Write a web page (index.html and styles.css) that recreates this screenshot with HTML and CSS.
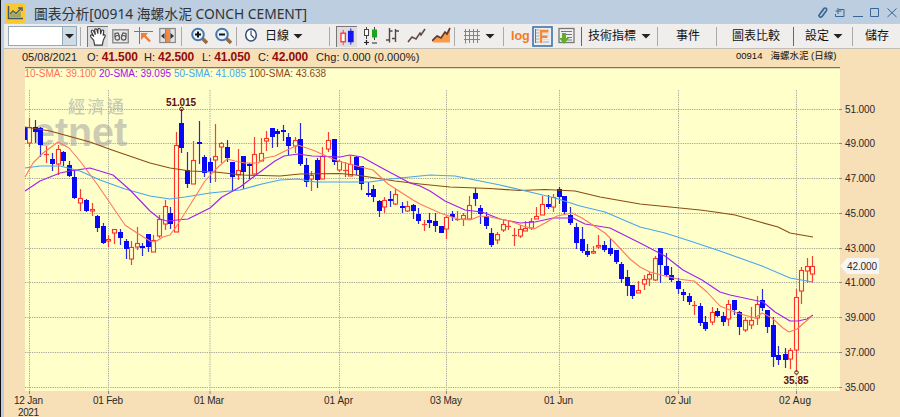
FILE: index.html
```html
<!DOCTYPE html>
<html lang="zh-Hant">
<head>
<meta charset="utf-8">
<title>圖表分析</title>
<link rel="stylesheet" href="styles.css">
</head>
<body>
<div class="window">
  <header class="titlebar">
    <svg class="app-icon" width="20" height="20" viewBox="0 0 20 20"><rect width="20" height="20" rx="2" fill="#fdc82f"/><path d="M3.500 3v12.500H18" fill="none" stroke="#405a60" stroke-width="1.500"/><path d="M5 14v-2l3-2 3 2 5-4v6z" fill="#a1a467"/><path d="M5 11l3-3 3 2.500 5-5M13 5h4v3" fill="none" stroke="#3e6670" stroke-width="1.500"/></svg>
    <h1 class="title">圖表分析[00914 海螺水泥 CONCH CEMENT]</h1>
    <svg class="controls" width="82" height="14" viewBox="816 6 82 14" fill="none" stroke="#376596">
      <path d="M818.500 16l5-7c1.500-2 4-.5 3 1.500l-4 5.500c-1.500 2-4.500 1-3-1.500l4-5" stroke-width="1.600"/>
      <path d="M839 9.500h5v7h-8.500V14M838 8v6M835.500 11h6"/>
      <path d="M853 16.500h10M870.500 8.500h8v8h-8zM887.500 8.500l9 8.500M896.500 8.500l-9 8.500"/>
    </svg>
  </header>
  <nav class="toolbar">
    <div class="combo"><span></span><i><b class="caret"></b></i></div>
    <i class="sep"></i>
    <svg class="pressed" width="21" height="21" viewBox="0 0 21 21"><path d="M7 19l-1-5-3-3.500c-1-2 .5-2.800 2.200-1.500l1 1-2.700-5c-.3-1.800 1.500-2.200 2.500-.5l1.800 3.500L7 3.500c0-1.800 2-2 2.500-.3L10.300 7l.2-4.500c.5-1.500 2.200-1.200 2.500.3l.2 4.700 1-3.500c.7-1.500 2.500-.8 2.300.8L15.800 9c1-1.800 2.800-1 2.200.8L16 14l-1 5z" fill="#fff" stroke="#3c3c3c" stroke-width="1.200"/></svg>
    <svg width="18" height="17" viewBox="0 0 18 17" fill="none" stroke="#8b8b8b"><rect x=".8" y="1.800" width="15.500" height="13" fill="#e8e8e8" stroke-width="1.400"/><g stroke="#555" stroke-width="1.200"><circle cx="5.300" cy="9.800" r="2.300"/><circle cx="11.700" cy="9.800" r="2.300"/><path d="M3 9V5.500l3-.5 1.500 3M14 9V5.500L11 5 9.500 8"/></g></svg>
    <svg width="20" height="19" viewBox="0 0 20 19" fill="none"><path d="M0 4.500h19M5.500 0v17" stroke="#777"/><path d="M7 6h7l-2.200 2.200 5 5.500-1.600 1.600-5.200-5.300L7 13z" fill="#f47d2d"/></svg>
    <svg width="18" height="18" viewBox="0 0 18 18"><rect x=".8" y="1.500" width="15.500" height="14" fill="#e3e3e3" stroke="#888" stroke-width="1.200"/><path d="M7 2h3.500v13H7z" fill="#f4873e"/><path d="M6.500 2v13M11 2v13" stroke="#888"/><path d="M2 9l3.500-3v6zM15 9l-3.500-3v6z" fill="#333"/></svg>
    <i class="sep"></i>
    <svg width="20" height="18" viewBox="0 0 20 18"><path d="M12 11l5 5" stroke="#9a6940" stroke-width="3.500"/><circle cx="8" cy="7.500" r="5.800" fill="#e9f5fd" stroke="#4976ac" stroke-width="2"/><path d="M5 7.500h6M8 4.500v6" stroke="#111" stroke-width="2"/></svg>
    <svg width="20" height="18" viewBox="0 0 20 18"><path d="M12 11l5 5" stroke="#9a6940" stroke-width="3.500"/><circle cx="8" cy="7.500" r="5.800" fill="#e9f5fd" stroke="#4976ac" stroke-width="2"/><path d="M5 7.500h6" stroke="#111" stroke-width="2"/></svg>
    <i class="sep"></i>
    <svg width="14" height="18" viewBox="0 0 14 18"><ellipse cx="7" cy="8" rx="5.300" ry="6" fill="#fff" stroke="#344f79" stroke-width="1.500"/><path d="M7 3.500V8l3 3" fill="none" stroke="#344f79" stroke-width="1.200"/></svg>
    <span>日線</span>
    <b class="caret"></b>
    <i class="sep"></i>
    <svg class="pressed" width="21" height="21" viewBox="0 0 21 21"><path d="M6.500 3v4m0 9v3" stroke="#f33"/><rect x="4.200" y="6.500" width="4.600" height="9" fill="#fff" stroke="#f33" stroke-width="1.400"/><path d="M14.500 1.500v17" stroke="#11c"/><path d="M11.500 4h6v12h-6z" fill="#1515ee"/></svg>
    <svg width="16" height="19" viewBox="0 0 16 19"><path d="M3.500 0v12M11.500 0v13" stroke="#444"/><rect x="1.500" y="2.500" width="4" height="6" fill="#fff" stroke="#444"/><path d="M9 2.500h5v8H9z" fill="#1ba51b"/><path d="M1 15.500h5M3.500 13v5M9 16h5" stroke="#222" stroke-width="1.200"/></svg>
    <svg width="16" height="18" viewBox="0 0 16 18" fill="none" stroke="#554844" stroke-width="1.400"><path d="M3.500 1v14.500M0 13h3.500M3.500 4h3M9.500 2v13M6 11.500h3.500M9.500 4H13"/></svg>
    <svg width="20" height="18" viewBox="0 0 20 18" fill="none" stroke="#5e4b44" stroke-width="1.600"><path d="M1 15l4-5 4 2 4-6 1 2 4-6"/></svg>
    <svg width="20" height="18" viewBox="0 0 20 18"><path d="M1 15.500V12l5-4 3 3 4-6 2 2 3-5v13.500z" fill="#fb9a48"/><path d="M0 14l5-5 4 2 4-6 2 2 3-6" fill="none" stroke="#603a26" stroke-width="1.700"/></svg>
    <i class="sep"></i>
    <svg width="18" height="18" viewBox="0 0 18 18" fill="none" stroke="#71889d"><path d="M2.500 2v14.500M6.500 2v14M10.500 2v14M14.500 2v14M1 4.500h16M1 8.500h16M1 12.500h16"/></svg>
    <b class="caret"></b>
    <i class="sep"></i>
    <span class="log">log</span>
    <svg width="21" height="21" viewBox="0 0 21 21"><rect x="1" y="1" width="19" height="19" fill="#eee" stroke="#3f73ab" stroke-width="1.600"/><path d="M3 4h14M3 7h14M3 10h14M3 13h14M3 16h14" stroke="#99a9b8"/><path d="M3.500 3v14" stroke="#59799b"/><path d="M7 3.500h10.500v4H11v2h6v4h-6v4H7z" fill="#eee"/><path d="M9 17V5.200H16.500M9 10.700H15.500" stroke="#f28a3c" stroke-width="2.400" fill="none"/></svg>
    <svg width="18" height="19" viewBox="0 0 18 19"><rect x="1" y="1.500" width="15" height="14" fill="#f0f0f0" stroke="#777" stroke-width="1.300"/><path d="M3 4.500h11M8 7.500h6M9 10.500h5M9 13h5" stroke="#777"/><path d="M4 6h4v5h3l-5 6-5-6h3z" fill="#62ad2c"/></svg>
    <i class="sep dark"></i>
    <span>技術指標</span><b class="caret"></b>
    <i class="sep"></i>
    <span>事件</span>
    <i class="sep"></i>
    <span>圖表比較</span>
    <i class="sep dark"></i>
    <span>設定</span><b class="caret"></b>
    <i class="sep"></i>
    <span>儲存</span>
  </nav>
  <div class="quote">
    <span class="date">05/08/2021</span>
    <span class="open">O: <b>41.500</b></span>
    <span class="high">H: <b>42.500</b></span>
    <span class="low">L: <b>41.050</b></span>
    <span class="close">C: <b>42.000</b></span>
    <span class="change">Chg: 0.000 (0.000%)</span>
    <span class="symbol"><span>00914</span><span>海螺水泥 (日線)</span></span>
  </div>
  <svg class="chart" id="chart" width="896" height="350" viewBox="4 67 896 350">
    <rect x="25" y="67" width="815" height="324" fill="#ffffca"/>
    <path d="M25 67.500h815" stroke="#77756a" stroke-width="1.400"/>
    <clipPath id="plot"><rect x="25" y="67" width="815" height="324"/></clipPath>
    <g class="watermark" clip-path="url(#plot)">
      <text x="68" y="113" class="wm-cn" textLength="56">經濟通</text>
      <text x="33" y="146" class="wm-en" textLength="94" lengthAdjust="spacingAndGlyphs">etnet</text>
    </g>
    <g id="grid"></g>
    <g id="candles" clip-path="url(#plot)"></g>
    <g id="averages"></g>
    <g class="legend">
      <text x="24.500" y="77" fill="#ff7058" textLength="71.500">10-SMA: 39.100</text>
      <text x="99" y="77" fill="#a010ee" textLength="72">20-SMA: 39.095</text>
      <text x="174" y="77" fill="#48a5ef" textLength="72">50-SMA: 41.085</text>
      <text x="249" y="77" fill="#8b4818" textLength="77">100-SMA: 43.638</text>
    </g>
    <g class="extreme"><circle cx="181.500" cy="109" r="1.800"/><text x="166" y="106" textLength="30">51.015</text><circle cx="796.500" cy="372.500" r="1.800"/><text x="783.500" y="383.500" textLength="25">35.85</text></g>
    <g id="labels" class="labels"></g>
    <path d="M840 266l7-8h32v16h-32z" fill="#f8f6f2"/>
    <text x="847" y="270" class="last" textLength="30">42.000</text>
  </svg>
</div>
<script src="chart.js"></script>
</body>
</html>
```
FILE: styles.css
```css
* { box-sizing: border-box; }
body { margin: 0; overflow: hidden; font-family: "Liberation Sans", "Noto Sans CJK TC", sans-serif; color: #222; }
.window { width: 900px; height: 417px; background: #f7dfb7; border-left: 1px solid #111; box-shadow: inset 3px 0 #bdcce0; padding-left: 3px; overflow: hidden; }
.titlebar { display: flex; align-items: flex-start; height: 24px; background: #bccedf; padding-top: 3px; }
.app-icon { margin: 0 9px 0 1px; }
.title { margin: 1px auto 0 0; font: 13.800px/20px "Noto Sans", "Noto Sans CJK TC", sans-serif; white-space: nowrap; color: #303236; }
.controls { margin: 3px 2px 0 0; }
.toolbar { display: grid; align-items: center; height: 25px; padding-left: 4px; background: #efeeed; border-bottom: 1px solid #c3bdb8; white-space: nowrap; font-size: 12px; line-height: 20px; color: #111;
  grid-template-columns: 72px 7px 25px 22px 25px 22px 9px 24px 22px 8px 21px 28px 36px 7px 27px 23px 21px 25px 22px 9px 22px 18px 8px 21px 26px 23px 7px 53px 16px 19px 40px 16px 61px 12px 28px 19px 13px 35px; }
.toolbar svg { display: block; }
.combo { display: flex; width: 69px; height: 20px; border: 1px solid #94a8b8; background: #fff; }
.combo span { flex: 1; }
.combo i { display: flex; align-items: center; justify-content: center; width: 14px; background: #cfdce6; border-left: 1px solid #94a8b8; }
.caret { display: block; width: 10px; height: 5px; background: #222; clip-path: polygon(0 0, 100% 0, 50% 100%); }
.sep { width: 1px; height: 19px; background: #aaa; }
.dark { background: #666; }
.pressed { background: #dedede; border-top: 1px solid #777; border-left: 1px solid #777; }
.log { color: #f07b27; font-weight: bold; font-size: 12.500px; letter-spacing: 0; }
.quote { display: grid; grid-template-columns: 65px 57px 58px 56px 58px 420px 1fr; height: 18px; padding-left: 18px; font-size: 11px; line-height: 17px; white-space: nowrap; }
.quote b { color: #900d0d; font-size: 12px; letter-spacing: -.1px; }
.change { letter-spacing: .1px; }
.symbol { display: flex; gap: 8px; font-size: 9.500px; line-height: 14px; color: #111; }
.chart { display: block; }
.watermark { fill: #ccccb4; }
.wm-cn { font: 500 17px "Noto Sans CJK TC", sans-serif; }
.wm-en { font: bold 40px "Liberation Sans", sans-serif; }
.grid-line { stroke: #a9a99b; stroke-width: 1; stroke-dasharray: 1.300 1; fill: none; }
.tick { stroke: #888; }
.up { fill: #ffffca; stroke: #ff3028; stroke-width: 1.100; }
.down { fill: #0808f4; }
.wick-up { stroke: #f44038; stroke-width: 1.200; }
.wick-down { stroke: #2828dc; stroke-width: 1.200; }
.average { fill: none; stroke-width: 1.100; stroke-linejoin: round; }
.legend { font-size: 10px; }
.extreme { fill: #601010; font-size: 10px; font-weight: bold; }
.extreme circle { fill: none; stroke: #601010; }
.labels, .last { font-size: 10px; fill: #292929; }
```
FILE: chart.js
```js
const NS = "http://www.w3.org/2000/svg";
function add(parent, tag, attrs, text) {
  const el = document.createElementNS(NS, tag);
  for (const k in attrs) el.setAttribute(k, attrs[k]);
  if (text) el.textContent = text;
  document.getElementById(parent).appendChild(el);
}

// Horizontal and vertical grid with axis labels.
[51, 49, 47, 45, 43, 41, 39, 37, 35].forEach((price, i) => {
  const y = Math.floor(109 + i * 34.75) + 0.5;
  add("grid", "path", { class: "grid-line", d: `M25 ${y}H840` });
  add("grid", "path", { class: "tick", d: `M839 ${y}h3` });
  add("labels", "text", { x: 845, y: y + 3.5, textLength: 30 }, price + ".000");
});
[[29.5, "12 Jan", 14, 29], [108.5, "01 Feb", 93, 30], [210, "01 Mar", 194, 30], [339.5, "01 Apr", 324, 29],
 [446.5, "03 May", 430, 32], [559.5, "01 Jun", 544, 29], [678.5, "02 Jul", 665, 26], [796.5, "02 Aug", 779, 32]]
.forEach(([x, label, left, width]) => {
  add("grid", "path", { class: "grid-line", d: `M${x} 90V391` });
  add("grid", "path", { class: "tick", d: `M${x} 391v3` });
  add("labels", "text", { x: left, y: 403.5, textLength: width }, label);
});
add("labels", "text", { x: 18, y: 416, textLength: 21 }, "2021");

// x, wick top, body top, body bottom, wick bottom; u = rising, d = falling
const candles = `24 126 127 140 140 d
29 118 127 143 147 u|35 120 127 132 143 d|40 127 128 145 157 d|46 146 154 155 163 u|52 153 159 164 171 d|58 145 149 164 175 u
63 151 152 161 166 d|69 161 165 176 177 d|74 170 177 198 199 d|80 189 198 203 211 u|86 199 200 211 212 d|92 203 209 211 216 u
97 215 216 228 232 d|103 223 226 243 244 d|108 235 239 241 247 u|114 229 229 233 244 u|120 229 232 238 245 d|126 239 241 249 259 d
131 241 247 259 265 u|137 227 243 247 250 u|142 243 246 248 256 d|148 234 234 247 252 d|153 235 240 252 252 u|159 215 219 236 238 u
165 200 206 224 230 u|170 207 213 224 229 d|176 132 145 232 232 u|181 109 123 148 153 d|187 152 170 184 188 d|193 141 160 184 184 u
199 121 142 144 164 d|204 155 157 173 177 d|210 158 162 171 183 d|215 124 156 160 182 u|221 142 143 147 163 u|227 140 147 158 162 d
232 162 162 177 191 d|238 149 170 175 180 u|243 156 156 172 189 d|249 163 164 166 179 d|254 137 154 174 174 u|261 138 153 161 161 u
266 131 138 141 151 u|272 128 128 137 148 d|277 129 131 134 147 d|283 125 130 132 141 d|288 133 137 146 155 d|295 137 140 146 153 u
300 123 139 164 166 d|306 158 165 182 187 d|311 171 175 179 191 u|317 158 160 180 188 d|322 147 156 179 179 u|328 132 140 149 152 u
334 139 139 162 165 d|339 160 161 170 172 u|345 162 170 171 177 u|350 156 164 176 176 u|356 156 157 170 175 d|361 166 166 184 190 d
368 182 193 195 197 d|373 185 189 197 202 d|379 200 201 211 217 d|384 197 200 207 213 u|390 191 199 200 207 d|395 189 194 204 205 u
402 202 206 208 213 d|407 201 206 211 212 u|413 204 205 211 219 d|418 208 214 221 224 d|424 220 224 225 231 u|429 213 220 223 228 d
435 213 221 226 232 d|441 226 226 233 233 d|446 216 217 229 239 u|452 211 214 217 221 d|457 211 219 220 221 u|463 213 215 219 226 u
469 196 205 219 219 u|475 188 193 199 206 d|480 205 208 214 224 d|486 212 216 226 229 d|491 228 233 245 247 d|497 232 234 240 244 u
503 220 224 230 232 u|508 220 226 227 230 u|514 228 235 236 246 u|520 225 229 236 238 u|525 221 228 231 231 u|531 218 221 228 230 u
536 207 216 219 219 u|542 196 204 215 215 u|548 195 204 207 209 d|553 194 197 207 212 u|559 187 189 197 204 d|564 196 196 212 214 d
570 207 215 223 225 d|576 223 227 243 249 d|582 227 239 251 253 d|587 244 251 255 257 d|593 246 251 253 254 u|598 235 245 247 249 u
604 241 245 250 252 d|610 238 248 254 256 d|616 250 250 262 264 d|621 262 264 279 283 d|627 270 277 286 296 d|632 285 285 296 299 d
638 281 290 293 293 u|644 275 279 284 290 u|649 272 274 279 286 u|655 256 258 280 281 u|660 248 248 265 283 d|666 253 266 275 277 d
671 267 275 280 282 d|678 278 281 289 294 d|683 289 292 295 301 d|689 293 296 302 305 d|694 301 305 306 315 u|700 303 306 323 326 d
705 316 322 329 331 d|712 307 312 322 325 u|717 308 311 316 317 d|723 312 316 322 326 d|728 300 304 319 326 u|734 300 300 310 315 d
739 311 312 327 335 d|745 317 320 330 332 u|751 307 320 325 329 u|757 296 304 318 325 u|762 289 300 308 311 d|767 310 310 327 333 d
773 317 325 357 367 d|778 346 355 360 365 d|785 348 354 360 368 d|790 348 350 359 369 u|796 289 297 350 372 u|801 267 270 291 304 u
807 258 266 271 283 u|812 256 266 274 283 u`;

candles.split(/[|\n]/).forEach(row => {
  const [xs, hi, top, bottom, lo, kind] = row.trim().split(" ");
  const x = +xs + 0.5, h = Math.max(1, bottom - top);
  if (kind === "u") {
    add("candles", "path", { class: "wick-up", d: `M${x} ${hi}V${top}M${x} ${bottom}V${lo}` });
    if (h === 1) add("candles", "path", { class: "wick-up", d: `M${x - 2.5} ${+top + 0.5}h5` });
    else add("candles", "rect", { class: "up", x: x - 2, y: +top + 0.5, width: 4, height: h - 0.5 });
  } else {
    add("candles", "path", { class: "wick-down", d: `M${x} ${hi}V${lo}` });
    add("candles", "rect", { class: "down", x: x - 2.5, y: top, width: 5, height: Math.max(2, h) });
  }
});

const averages = {
  "#8b4c12": "25,127 50,131 90,142 112,150 150,163 170,168 190,171 215,172 243,175 280,176 300,174 340,173.500 356,175 395,181 420,184 450,187 490,188.500 520,190.500 545,189.500 575,191 600,197 640,204 660,206 700,210 715,212 735,215 760,222 778,227 790,233 813,237",
  "#48a5ef": "25,168 40,166 60,166 80,171 100,180 125,189 150,196 170,199 185,197 210,193 240,190 262,184 280,180 298,179 315,182 370,182 390,179 410,177 430,175 455,176 475,180 500,185 530,192 555,198 580,206 605,212 640,227 665,233 690,241 720,251 762,266 790,278 813,282",
  "#a020ee": "25,191 40,181 60,173 70,170 90,168 113,175 130,190 150,211 160,219 167,221 188,219 200,213 210,208 222,197 240,187 260,172 275,161 284,156 298,154 312,156 340,157 350,155 362,157 380,167 410,183 420,186 430,191 445,201 465,210 482,212 500,219 520,223 535,222 553,218 573,218 585,224 610,228 640,243 665,256 683,270 702,280 720,292 730,295 763,302 775,312 790,321 798,321 807,319 813,315",
  "#ff7860": "25,177 33,163 43,153 58,142 69,148 80,161 97,184 108,200 125,225 137,233 150,241 155,242 163,237 170,235 176,227 190,205 205,181 216,169 227,159 235,161 245,163 258,163 265,158 275,156 285,151 298,145 315,151 333,159 342,162 357,166 373,170 388,184 413,200 420,204 440,213 458,219 470,220 480,216 490,217 510,221 523,226 534,229 545,223 557,216 572,213 582,218 605,233 615,243 630,259 640,267 650,272 665,276 678,279 694,281 707,292 720,306 737,313 755,318 762,313 772,318 783,328 789,332 797,329 812,316"
};
// The 20- and 50-day averages start with the purple line lowest.
averages["#a020ee"] = averages["#a020ee"].replace("70,170 90,168 113,175 130,190 150,211", "70,171 90,168 113,175 130,190 150,211");
for (const color in averages) add("averages", "polyline", { class: "average", stroke: color, points: averages[color] });
```
